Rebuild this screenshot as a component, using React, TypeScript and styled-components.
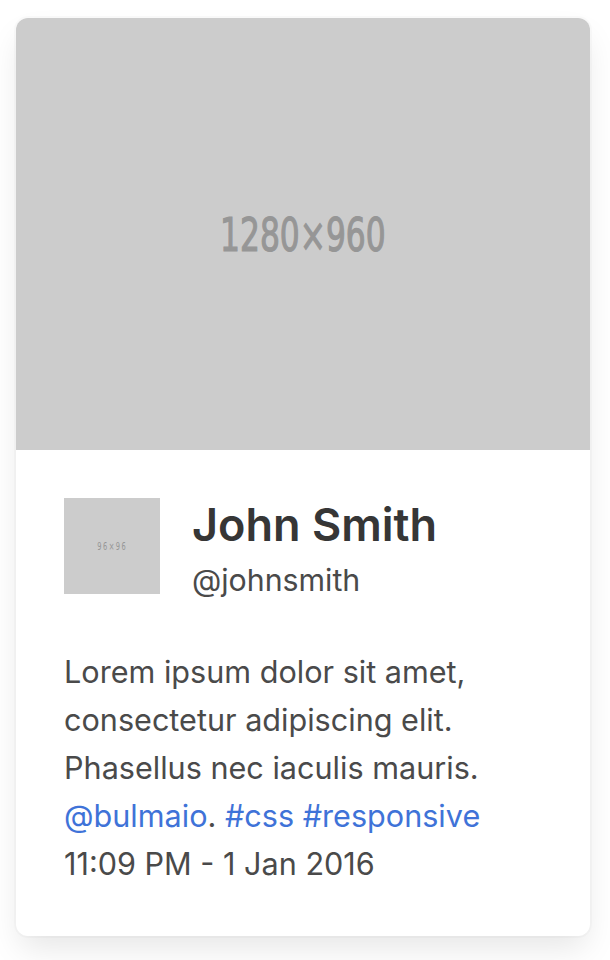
import React from 'react';
import styled, { createGlobalStyle } from 'styled-components';

const GlobalStyle = createGlobalStyle`
  html, body {
    margin: 0;
    padding: 0;
    background: #ffffff;
  }
  body {
    font-family: Inter, "Noto Sans", "Liberation Sans", sans-serif;
    color: #4a4a4a;
    -webkit-font-smoothing: antialiased;
  }
`;

const Page = styled.div`
  padding: 18px 20px 24px 16px;
`;

const Card = styled.div`
  background: #ffffff;
  border-radius: 12px;
  overflow: hidden;
  box-shadow: 0 16px 32px -4px rgba(10, 10, 10, 0.1), 0 0 0 2px rgba(10, 10, 10, 0.02);
`;

const Placeholder = styled.div<{ $size: number; $spacing?: number; $stroke?: number }>`
  background: #cccccc;
  display: flex;
  align-items: center;
  justify-content: center;
  color: #969696;
  font-family: "DejaVu Sans Condensed", "Liberation Sans", sans-serif;
  font-weight: 400;
  font-size: ${p => p.$size}px;
  letter-spacing: ${p => p.$spacing ?? 0}px;
  -webkit-text-stroke: ${p => p.$stroke ?? 0}px #969696;
  overflow: hidden;

  span {
    display: inline-block;
    transform: scaleX(0.74);
  }
`;

const Cover = styled(Placeholder)`
  height: 432px;
`;

const Thumb = styled(Placeholder)`
  width: 96px;
  height: 96px;
  flex-shrink: 0;
`;

const Content = styled.div`
  padding: 48px;
`;

const Media = styled.div`
  display: flex;
  align-items: flex-start;
  gap: 32px;
  margin-bottom: 48px;
`;

const MediaBody = styled.div`
  display: flex;
  flex-direction: column;
  gap: 8px;
`;

const Title = styled.p`
  margin: 0;
  font-size: 45px;
  line-height: 54px;
  font-weight: 600;
  color: #363636;
`;

const Subtitle = styled.p`
  margin: 0;
  font-size: 30.3px;
  line-height: 40px;
  color: #4a4a4a;
`;

const Text = styled.div`
  font-size: 30.6px;
  line-height: 48px;
  color: #4a4a4a;
`;

const Link = styled.a`
  color: #3f73d8;
  text-decoration: none;
`;

export default function App() {
  return (
    <Page>
      <GlobalStyle />
      <Card>
        <Cover $size={47} $stroke={1.2}>
          <span>1280×960</span>
        </Cover>
        <Content>
          <Media>
            <Thumb $size={10} $spacing={2}>
              <span>96×96</span>
            </Thumb>
            <MediaBody>
              <Title>John Smith</Title>
              <Subtitle>@johnsmith</Subtitle>
            </MediaBody>
          </Media>
          <Text>
            Lorem ipsum dolor sit amet, consectetur adipiscing elit. Phasellus nec iaculis mauris.{' '}
            <Link href="#">@bulmaio</Link>. <Link href="#">#css</Link> <Link href="#">#responsive</Link>
            <br />
            11:09 PM - 1 Jan 2016
          </Text>
        </Content>
      </Card>
    </Page>
  );
}
